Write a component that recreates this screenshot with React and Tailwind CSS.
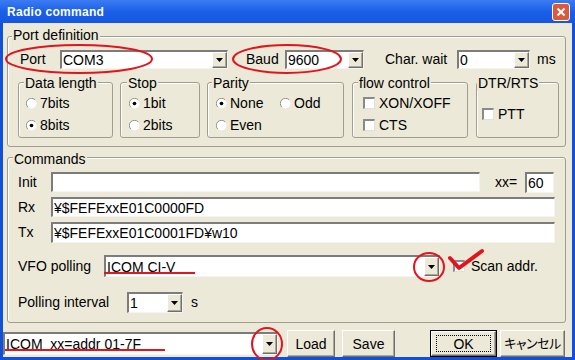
import clsx from 'clsx';

const sunken =
  'bg-white border-t-2 border-l-2 border-b border-r border-t-[#7c7c7c] border-l-[#7c7c7c] border-b-[#f5f4ef] border-r-[#f5f4ef]';
const raised =
  'bg-[#ece9d8] border border-t-white border-l-white border-b-[#6f6f6f] border-r-[#6f6f6f] shadow-[inset_-1px_-1px_0_#aca899]';

function Arrow() {
  return (
    <div className={clsx('w-[15px] shrink-0 flex items-center justify-center', raised)}>
      <svg width="7" height="4" viewBox="0 0 7 4">
        <path d="M0 0h7L3.5 4z" fill="#000" />
      </svg>
    </div>
  );
}

function Combo({ value, className }) {
  return (
    <div className={clsx('flex items-stretch', sunken, className)}>
      <span className="flex-1 self-center pl-[1px] leading-none whitespace-pre">{value}</span>
      <Arrow />
    </div>
  );
}

function Radio({ label, checked }) {
  return (
    <div className="flex items-center h-[22px] gap-[3px]">
      <svg width="11" height="11" viewBox="0 0 12 12" className="shrink-0">
        <circle cx="6" cy="6" r="5.5" fill="#fff" />
        <path d="M10 2A5.5 5.5 0 0 0 2 10" stroke="#8a8a8a" fill="none" />
        {checked && <circle cx="6" cy="6" r="2" fill="#000" />}
      </svg>
      <span className="leading-none">{label}</span>
    </div>
  );
}

function Check({ label, className }) {
  return (
    <div className={clsx('flex items-center gap-[4px]', className)}>
      <span className="w-[12px] h-[12px] shrink-0 bg-white border-t-2 border-l-2 border-t-[#8a8a8a] border-l-[#8a8a8a] border-b border-r border-b-[#e4e1d4] border-r-[#e4e1d4]" />
      <span className="leading-none">{label}</span>
    </div>
  );
}

function Group({ label, className, labelClass, children }) {
  return (
    <div className={clsx('relative border border-[#a09e90] rounded-[3px] shadow-[inset_1px_1px_0_#fff]', className)}>
      <span className={clsx('absolute px-[1px] bg-[#ece9d8] leading-[15px]', labelClass)}>{label}</span>
      {children}
    </div>
  );
}

function Btn({ children, className }) {
  return (
    <button className={clsx('h-[27px] flex items-center justify-center leading-none whitespace-nowrap', raised, className)}>
      {children}
    </button>
  );
}

export default function App() {
  return (
    <div className="relative w-[575px] h-[360px] bg-[#1150d8] flex flex-col overflow-hidden font-['Liberation_Sans','Noto_Sans_CJK_JP',sans-serif] text-[14px] text-black">
      {/* Title bar */}
      <div className="h-[23px] shrink-0 flex items-center justify-between pl-[7px] pr-[5px] bg-gradient-to-b from-[#3b7cf2] via-[#1a5fe8] to-[#1656e0]">
        <span className="text-white font-bold text-[12px] tracking-[0.3px]">Radio command</span>
        <div className="w-[18px] h-[18px] rounded-[3px] border border-white bg-[#dc5a3c] flex items-center justify-center">
          <svg width="10" height="10" viewBox="0 0 10 10">
            <path d="M1.5 1.5l7 7M8.5 1.5l-7 7" stroke="#fff" strokeWidth="2" />
          </svg>
        </div>
      </div>

      {/* Body */}
      <div className="flex-1 mx-[3px] mb-[3px] bg-[#ece9d8] flex flex-col">
        {/* Port definition */}
        <Group
          label="Port definition"
          className="ml-[4px] w-[559px] mt-[13px] h-[111px] pl-[10px] pt-[13px]"
          labelClass="-top-[9px] left-[4px]"
        >
          <div className="flex items-center h-[19px] pl-[2px]">
            <span className="w-[40px]">Port</span>
            <Combo value="COM3" className="w-[168px] h-[19px]" />
            <span className="ml-[18px] w-[39px]">Baud</span>
            <Combo value="9600" className="w-[79px] h-[19px]" />
            <span className="ml-[21px] w-[72px]">Char. wait</span>
            <Combo value="0" className="w-[73px] h-[19px]" />
            <span className="ml-[7px]">ms</span>
          </div>

          <div className="flex mt-[13px] h-[56px]">
            <Group label="Data length" className="w-[95px] pl-[7px] pt-[9px]" labelClass="-top-[7px] left-[5px]">
              <Radio label="7bits" />
              <Radio label="8bits" checked />
            </Group>
            <Group label="Stop" className="ml-[7px] w-[80px] pl-[8px] pt-[9px]" labelClass="-top-[7px] left-[6px]">
              <Radio label="1bit" checked />
              <Radio label="2bits" />
            </Group>
            <Group label="Parity" className="ml-[7px] w-[137px] pl-[8px] pt-[9px]" labelClass="-top-[7px] left-[4px]">
              <div className="grid grid-cols-[64px_1fr]">
                <Radio label="None" checked />
                <Radio label="Odd" />
                <Radio label="Even" />
              </div>
            </Group>
            <Group label="flow control" className="ml-[8px] w-[116px] pl-[10px] pt-[9px]" labelClass="-top-[7px] left-[5px]">
              <Check label="XON/XOFF" className="h-[22px]" />
              <Check label="CTS" className="h-[22px]" />
            </Group>
            <Group label="DTR/RTS" className="ml-[8px] w-[83px] pl-[5px] pt-[20px]" labelClass="-top-[7px] left-[0px]">
              <Check label="PTT" className="h-[22px]" />
            </Group>
          </div>
        </Group>

        {/* Commands */}
        <Group
          label="Commands"
          className="ml-[4px] w-[559px] mt-[10px] h-[166px] pl-[10px] pt-[14px]"
          labelClass="-top-[6px] left-[5px]"
        >
          <div className="flex items-center h-[20px]">
            <span className="w-[33px]">Init</span>
            <div className={clsx(sunken, 'w-[429px] h-[20px]')} />
            <span className="ml-[15px] w-[30px]">xx=</span>
            <div className={clsx(sunken, 'w-[29px] h-[21px] flex items-center pl-[1px] leading-none')}>60</div>
          </div>
          <div className="flex items-center h-[20px] mt-[5px]">
            <span className="w-[33px]">Rx</span>
            <div className={clsx(sunken, 'w-[504px] h-[20px] flex items-center pl-[1px] leading-none')}>
              ¥$FEFExxE01C0000FD
            </div>
          </div>
          <div className="flex items-center h-[21px] mt-[5px]">
            <span className="w-[33px]">Tx</span>
            <div className={clsx(sunken, 'w-[504px] h-[21px] flex items-center pl-[1px] leading-none')}>
              ¥$FEFExxE01C0001FD¥w10
            </div>
          </div>
          <div className="flex items-center h-[22px] mt-[12px]">
            <span className="w-[86px]">VFO polling</span>
            <Combo value="ICOM CI-V" className="w-[336px] h-[22px]" />
            <Check label="Scan addr." className="ml-[13px] gap-[6px]" />
          </div>
          <div className="flex items-center h-[21px] mt-[15px]">
            <span className="w-[109px]">Polling interval</span>
            <Combo value="1" className="w-[56px] h-[21px]" />
            <span className="ml-[8px]">s</span>
          </div>
        </Group>

        {/* Bottom row */}
        <div className="flex items-start mt-[7px]">
          <Combo value="ICOM  xx=addr 01-7F" className="w-[275px] h-[23px] mt-[2px]" />
          <Btn className="ml-[9px] w-[48px]">Load</Btn>
          <Btn className="ml-[7px] w-[53px]">Save</Btn>
          <div className="ml-[35px] w-[67px] h-[27px] border border-black">
            <Btn className="w-full h-full">
              <span className="w-[55px] h-[17px] flex items-center justify-center border border-dotted border-black">OK</span>
            </Btn>
          </div>
          <Btn className="ml-[3px] w-[65px] text-[13px] tracking-[-0.5px] [font-feature-settings:'palt']">キャンセル</Btn>
        </div>
      </div>

      {/* Red annotations */}
      <svg
        className="absolute inset-0 pointer-events-none"
        width="575"
        height="360"
        viewBox="0 0 575 360"
        fill="none"
        stroke="#e3141e"
        strokeWidth="2"
      >
        <ellipse cx="79" cy="59" rx="73" ry="14" />
        <ellipse cx="287" cy="59" rx="54" ry="14" />
        <ellipse cx="429" cy="267" rx="15" ry="14" />
        <ellipse cx="267" cy="344" rx="15" ry="16" />
        <path d="M104 273H195" />
        <path d="M5 350H165" />
        <path d="M450 258L459 268L482 251" strokeWidth="4" strokeLinecap="round" strokeLinejoin="round" />
      </svg>
    </div>
  );
}
